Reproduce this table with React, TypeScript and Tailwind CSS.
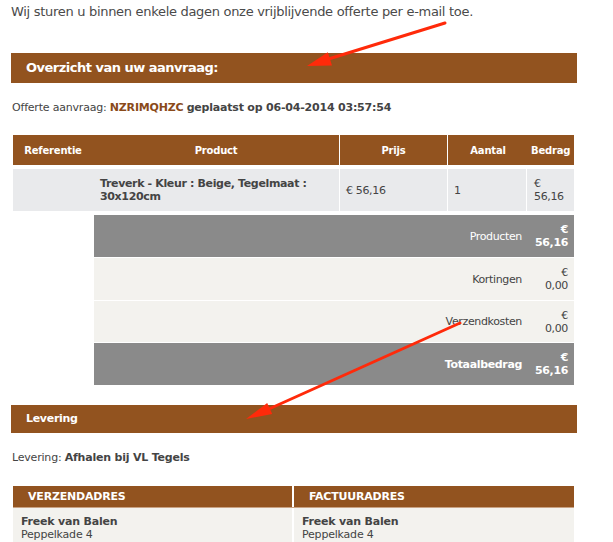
export default function App() {
  const brown = "bg-[#92531f]";
  return (
    <div className="relative w-[613px] h-[542px] overflow-hidden bg-white font-['DejaVu_Sans',sans-serif] text-[#444]">
      <div className="pl-[11px] pr-[36px]">
        {/* intro */}
        <p className="pt-[4px] text-[13px] leading-[16px] tracking-[-0.3px] text-[#4a4a4a]">
          Wij sturen u binnen enkele dagen onze vrijblijvende offerte per e-mail toe.
        </p>

        {/* overview bar */}
        <div className={`mt-[33px] h-[30px] ${brown} flex items-center pl-[15px]`}>
          <h2 className="text-[13px] font-bold tracking-[-0.5px] text-white">Overzicht van uw aanvraag:</h2>
        </div>

        <p className="mt-[18px] text-[11px] leading-[14px] tracking-[-0.2px] pl-[1px]">
          Offerte aanvraag: <span className="font-bold text-[#8a4a1a]">NZRIMQHZC</span>{" "}
          <span className="font-bold">geplaatst op 06-04-2014 03:57:54</span>
        </p>

        {/* products table */}
        <div className="mt-[20px] ml-[2px] w-[561px] text-[11px] leading-[13px] tracking-[-0.35px]">
          <div className={`flex h-[30px] ${brown} font-bold text-white text-[10px] tracking-[-0.2px]`}>
            <div className="w-[80px] flex items-center justify-center">Referentie</div>
            <div className="w-[247px] flex items-center justify-center border-r border-white">Product</div>
            <div className="w-[108px] flex items-center justify-center border-r border-white">Prijs</div>
            <div className="w-[80px] flex items-center justify-center">Aantal</div>
            <div className="w-[44px] flex items-center pl-[3px] whitespace-nowrap">Bedrag</div>
          </div>

          <div className="mt-[4px] flex h-[42px] bg-[#e9eaec]">
            <div className="w-[80px]" />
            <div className="w-[247px] flex items-center pl-[7px] font-bold border-r border-white">
              Treverk - Kleur : Beige, Tegelmaat : 30x120cm
            </div>
            <div className="w-[108px] flex items-center pl-[6px] border-r border-white">€ 56,16</div>
            <div className="w-[79px] flex items-center pl-[6px] border-r border-white">1</div>
            <div className="w-[45px] flex flex-col justify-center pl-[7px]">
              <span>€</span>
              <span>56,16</span>
            </div>
          </div>

          <div className="mt-[4px] ml-[81px] w-[480px] flex flex-col gap-[1px]">
            <div className="flex h-[42px] bg-[#8a8a8a] text-white">
              <div className="flex-1 flex items-center justify-end pr-[8px]">Producten</div>
              <div className="w-[44px] flex flex-col justify-center items-end pr-[6px] font-bold">
                <span>€</span>
                <span>56,16</span>
              </div>
            </div>
            <div className="flex h-[42px] bg-[#f3f2ee]">
              <div className="flex-1 flex items-center justify-end pr-[8px]">Kortingen</div>
              <div className="w-[44px] flex flex-col justify-center items-end pr-[6px]">
                <span>€</span>
                <span>0,00</span>
              </div>
            </div>
            <div className="flex h-[41px] bg-[#f3f2ee]">
              <div className="flex-1 flex items-center justify-end pr-[8px]">Verzendkosten</div>
              <div className="w-[44px] flex flex-col justify-center items-end pr-[6px]">
                <span>€</span>
                <span>0,00</span>
              </div>
            </div>
            <div className="flex h-[42px] bg-[#8a8a8a] text-white font-bold">
              <div className="flex-1 flex items-center justify-end pr-[8px]">Totaalbedrag</div>
              <div className="w-[44px] flex flex-col justify-center items-end pr-[6px]">
                <span>€</span>
                <span>56,16</span>
              </div>
            </div>
          </div>
        </div>

        {/* delivery */}
        <div className={`mt-[20px] h-[28px] ${brown} flex items-center pl-[15px]`}>
          <h2 className="text-[11px] font-bold tracking-[-0.3px] text-white">Levering</h2>
        </div>

        <p className="mt-[18px] text-[11px] leading-[14px] tracking-[-0.2px] pl-[1px]">
          Levering: <span className="font-bold">Afhalen bij VL Tegels</span>
        </p>

        <div className="mt-[21px] ml-[2px] w-[561px] text-[11px] leading-[13px] tracking-[-0.2px]">
          <div className={`flex h-[22px] ${brown} font-bold text-white border-b border-[#c9a283]`}>
            <div className="w-[281px] flex items-center pl-[15px] border-r-2 border-white">VERZENDADRES</div>
            <div className="flex-1 flex items-center pl-[15px]">FACTUURADRES</div>
          </div>
          <div className="flex bg-[#f3f2ee] h-[40px]">
            <div className="w-[281px] pl-[8px] pt-[7px] border-r-2 border-white">
              <div className="font-bold">Freek van Balen</div>
              <div>Peppelkade 4</div>
            </div>
            <div className="flex-1 pl-[8px] pt-[7px]">
              <div className="font-bold">Freek van Balen</div>
              <div>Peppelkade 4</div>
            </div>
          </div>
        </div>
      </div>

      {/* annotation arrows */}
      <svg className="absolute inset-0 pointer-events-none" width="613" height="542">
        <line x1="445" y1="23" x2="322" y2="61" stroke="#ff2a0a" strokeWidth="3" strokeLinecap="round" />
        <polygon points="307,66 332,65.6 327.8,52.2" fill="#ff2a0a" />
        <line x1="460" y1="323" x2="260" y2="413" stroke="#ff2a0a" strokeWidth="3" strokeLinecap="round" />
        <polygon points="246,419 272.2,413.9 267.2,402.9" fill="#ff2a0a" />
      </svg>
    </div>
  );
}
